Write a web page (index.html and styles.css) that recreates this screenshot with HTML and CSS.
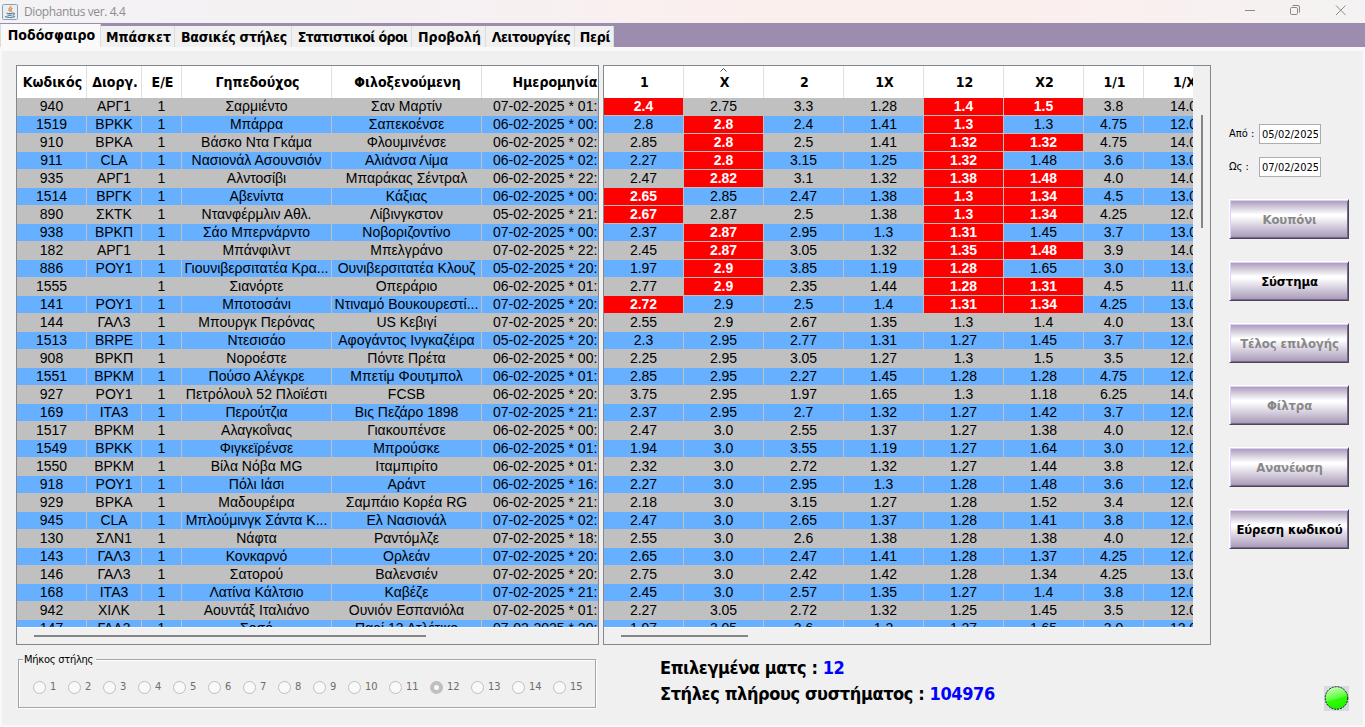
FILE: index.html
```html
<!DOCTYPE html>
<html lang="el">

<head>
	<meta charset="utf-8" />
	<meta name="viewport" content="width=device-width, initial-scale=1.0" />
	<title>Diophantus ver. 4.4</title>
	<link rel="stylesheet" href="styles.css">
	<script src="script.js" defer></script>
</head>

<body>
	<header class="titlebar">
		<svg class="app-icon" width="16" height="16" viewBox="0 0 16 16">
			<rect x="0.5" y="0.5" width="15" height="15" rx="1" fill="#e9eef2" stroke="#8ba0b0" />
			<path d="M8.6 2c1 1.400-2.400 2.300-1.700 3.900.2.600.8 1 .9 1.600M10.400 4.200c-1.400.6-2 1.500-1.300 2.400.4.500.2.900-.2 1.300" fill="none" stroke="#e8803a" stroke-width="1.300" />
			<path d="M4.500 9c1.500.6 4.500.6 6.200 0M5.300 10.900c1.300.5 3.400.5 4.700 0M3 12.600c2.500 1.100 7.500 1.100 10 0M10.800 9.100c2.200-.4 2 1.700-.2 2.100" fill="none" stroke="#5382a1" stroke-width="1.100" />
		</svg>
		<span class="title">Diophantus ver. 4.4</span>
		<svg class="window-buttons" width="106" height="14" viewBox="0 0 106 14" fill="none" stroke="#8c8888">
			<path d="M1 7.500h10" />
			<rect x="46.500" y="4.500" width="7" height="7" rx="1.200" />
			<path d="M48.500 2.500h5.500q1.500 0 1.500 1.500v5.500" />
			<path d="M92 2.500l9.500 9.500M101.500 2.500L92 12" />
		</svg>
	</header>

	<nav class="tabs">
		<span class="tab selected">Ποδόσφαιρο</span>
		<span class="tab tab-basket">Μπάσκετ</span>
		<span class="tab tab-basic">Βασικές στήλες</span>
		<span class="tab tab-stats">Στατιστικοί όροι</span>
		<span class="tab tab-view">Προβολή</span>
		<span class="tab tab-tools">Λειτουργίες</span>
		<span class="tab tab-about">Περί</span>
	</nav>

	<main class="panel">
		<div class="workspace">
			<section class="pane pane-matches">
				<div class="viewport">
					<div class="row head">
						<span>Κωδικός</span><span>Διοργ.</span><span>Ε/Ε</span><span>Γηπεδούχος</span><span>Φιλοξενούμενη</span><span>Ημερομηνία</span>
					</div>
					<div id="matches"></div>
				</div>
				<div class="hscroll"></div>
			</section>

			<section class="pane pane-odds">
				<div class="viewport">
					<div class="row head">
						<span>1</span>
						<span class="sorted"><svg class="sort-mark" width="7" height="4" viewBox="0 0 7 4" fill="none" stroke="#555"><path d="M0.500 3.500l3-3 3 3" /></svg>X</span>
						<span>2</span><span>1X</span><span>12</span><span>X2</span><span>1/1</span><span>1/X</span>
					</div>
					<div id="odds"></div>
				</div>
				<div class="vscroll"></div>
				<div class="hscroll"></div>
			</section>

			<aside class="sidebar">
				<label class="date"><span>Από :</span><input value="05/02/2025"></label>
				<label class="date"><span>Ως :</span><input value="07/02/2025"></label>
				<div class="buttons">
					<button disabled>Κουπόνι</button>
					<button>Σύστημα</button>
					<button disabled>Τέλος επιλογής</button>
					<button disabled>Φίλτρα</button>
					<button disabled>Ανανέωση</button>
					<button>Εύρεση κωδικού</button>
				</div>
			</aside>
		</div>

		<footer class="footer">
			<div class="group">
				<span class="legend">Μήκος στήλης</span>
				<div class="radios" id="lengths"></div>
			</div>
			<div class="status">
				<div>Επιλεγμένα ματς : <b>12</b></div>
				<div>Στήλες πλήρους συστήματος : <b>104976</b></div>
			</div>
			<svg class="led" width="25" height="25" viewBox="0 0 25 25">
				<defs>
					<linearGradient id="shine" x1="0.200" y1="0" x2="0.500" y2="1">
						<stop offset="0" stop-color="#d0ffc4" />
						<stop offset="0.550" stop-color="#5cff3c" />
						<stop offset="0.600" stop-color="#2bff00" />
						<stop offset="1" stop-color="#22f000" />
					</linearGradient>
				</defs>
				<rect width="25" height="25" fill="#d6d9e2" />
				<circle cx="12.500" cy="12" r="11.300" fill="url(#shine)" stroke="#111" stroke-dasharray="2 1" />
			</svg>
		</footer>
	</main>
</body>

</html>
```
FILE: styles.css
```css
* {
	box-sizing: border-box;
}

body {
	margin: 0;
	width: 1365px;
	height: 727px;
	overflow: hidden;
	display: flex;
	flex-direction: column;
	background: #f0f0f0;
	color: #000;
	font-family: "DejaVu Sans Condensed", "DejaVu Sans", sans-serif;
	font-stretch: condensed;
}

.titlebar {
	height: 23px;
	flex: none;
	display: flex;
	align-items: center;
	padding: 0 15px 0 2px;
	background: linear-gradient(90deg, #f3f2f4 0, #f5f1f3 30%, #fbefee 55%, #fbefee 75%, #f4f2f2 100%);
}

.title {
	flex: 1;
	margin-left: 6px;
	color: #8f8c8d;
	font: 12px/22px "Open Sans", sans-serif;
	letter-spacing: -0.4px;
}

.window-buttons {
	margin-bottom: 3px;
}

.tabs {
	height: 24px;
	flex: none;
	display: flex;
	align-items: flex-end;
	background: #9c8cae;
}

.tab {
	height: 21px;
	padding-left: 2px;
	border-right: 1px solid #dcdcdc;
	background: #f0f0f0;
	font-size: 14px;
	font-weight: bold;
	line-height: 22px;
	text-align: center;
	white-space: nowrap;
}

.selected {
	width: 101px;
	height: 23px;
	border-left: 1px solid #dcdcdc;
	background: #f9f9f9;
}

.tab-basket {
	width: 74px;
}

.tab-basic {
	width: 117px;
	letter-spacing: -0.3px;
}

.tab-stats {
	width: 120px;
	letter-spacing: -0.6px;
}

.tab-view {
	width: 74px;
}

.tab-tools {
	width: 89px;
	letter-spacing: -0.5px;
}

.tab-about {
	width: 39px;
	letter-spacing: -0.3px;
}

.panel {
	flex: 1;
	border: solid #f9f9f9;
	border-width: 4px 2px 2px;
	padding: 14px 0 0 14px;
}

.workspace {
	display: flex;
	height: 580px;
}

.pane {
	border: 1px solid #828790;
	display: grid;
	grid-template-rows: 561px 1fr;
}

.pane-matches {
	width: 583px;
}

.pane-odds {
	width: 608px;
	margin-left: 4px;
	grid-template-columns: 589px 1fr;
}

.viewport {
	overflow: hidden;
}

.row {
	display: grid;
	height: 18px;
	border-bottom: 1px solid #c0c0c0;
	font: 14px/17px "Liberation Sans", sans-serif;
	text-align: center;
	white-space: nowrap;
}

.pane-matches .row {
	grid-template-columns: 70px 55px 40px 150px 150px 145px;
}

.pane-odds .row {
	grid-template-columns: repeat(6, 80px) 60px 80px;
}

.row span {
	border-right: 1px solid #c0c0c0;
	background: #c0c0c0;
}

.row:nth-child(even) span {
	background: #66b0ff;
}

.row .date-cell {
	padding-left: 11px;
	text-align: left;
}

.row .picked.picked {
	background: #f00;
	color: #fff;
	font-weight: bold;
}

.row.head {
	height: 32px;
	border-bottom-color: #e6e6e6;
	font: bold 14px/32px "DejaVu Sans Condensed", "DejaVu Sans", sans-serif;
	font-stretch: condensed;
}

.row.head span {
	padding-left: 2px;
	border-right-color: #e0e0e0;
	background: #fff;
}

.sorted {
	position: relative;
}

.sort-mark {
	position: absolute;
	left: 36px;
	top: 2px;
}

.hscroll {
	border-top: 1px solid #fbfbfb;
	padding: 7px 0 0 17px;
}

.hscroll::before,
.vscroll::before {
	content: "";
	display: block;
	background: #868686;
}

.hscroll::before {
	width: 392px;
	height: 2px;
}

.pane-odds .hscroll::before {
	width: 127px;
}

.vscroll {
	padding: 49px 0 0 8px;
}

.vscroll::before {
	width: 2px;
	height: 113px;
}

.sidebar {
	margin: 58px 0 0 18px;
	width: 122px;
}

.date {
	display: flex;
	align-items: center;
	height: 21px;
	margin-bottom: 12px;
	font-size: 11px;
}

.date span {
	width: 30px;
}

.date input {
	width: 62px;
	height: 20px;
	border: 1px solid #abadb3;
	padding: 1px 2px 0;
	background: #fff;
	font: inherit;
}

.buttons {
	display: grid;
	gap: 22px;
	margin-top: 22px;
}

.buttons button {
	width: 120px;
	height: 40px;
	padding: 0 0 0 1px;
	border: 1px solid;
	border-color: #fff #4f4559 #4f4559 #fff;
	box-shadow: inset 1px 1px #e0ccff, inset -1px -1px #76688a;
	background: linear-gradient(#a697b7, #fff 38%, #fff 42%, #a697b7);
	color: #000;
	font: bold 13px "DejaVu Sans Condensed", "DejaVu Sans", sans-serif;
	font-stretch: condensed;
	letter-spacing: -0.1px;
	white-space: nowrap;
}

.buttons button:disabled {
	color: #888;
}

.footer {
	display: flex;
	align-items: flex-start;
}

.group {
	width: 578px;
	height: 49px;
	margin: 14px 0 0 2px;
	border: 1px solid #a5a5a5;
	box-shadow: 1px 1px #fff, inset 1px 1px #fff;
	font-size: 11px;
}

.legend {
	display: block;
	width: 73px;
	margin: -7px 0 0 4px;
	padding-left: 1px;
	background: #f0f0f0;
	line-height: 14px;
	letter-spacing: -0.25px;
	white-space: nowrap;
}

.radios {
	display: flex;
	margin: 13px 0 0 14px;
	color: #6d6d6d;
}

.radios label {
	display: flex;
	align-items: center;
	gap: 4px;
	width: 35px;
	line-height: 14px;
}

.radios .wide {
	width: 41px;
}

.dot {
	width: 13px;
	height: 13px;
	border: 1px solid #bfbfbf;
	border-radius: 50%;
	background: #f9f9f9;
}

.dot.on {
	border: 4px solid #bfbfbf;
}

.status {
	width: 728px;
	padding: 10px 0 0 64px;
	font-size: 18px;
	font-weight: bold;
	line-height: 26px;
	letter-spacing: -0.4px;
	white-space: nowrap;
}

.status b {
	color: #00f;
}

.led {
	margin-top: 41px;
}
```
FILE: script.js
```js
// code, league, min, home, away, kickoff | 1, X, 2, 1X, 12, X2, 1/1, 1/X  (* = picked)
const matches = `
940,ΑΡΓ1,1,Σαρμιέντο,Σαν Μαρτίν,07-02-2025 * 01:|*2.4,2.75,3.3,1.28,*1.4,*1.5,3.8,14.0
1519,ΒΡΚΚ,1,Μπάρρα,Σαπεκοένσε,06-02-2025 * 00:|2.8,*2.8,2.4,1.41,*1.3,1.3,4.75,12.0
910,ΒΡΚΑ,1,Βάσκο Ντα Γκάμα,Φλουμινένσε,06-02-2025 * 02:|2.85,*2.8,2.5,1.41,*1.32,*1.32,4.75,14.0
911,CLA,1,Νασιονάλ Ασουνσιόν,Αλιάνσα Λίμα,06-02-2025 * 02:|2.27,*2.8,3.15,1.25,*1.32,1.48,3.6,13.0
935,ΑΡΓ1,1,Αλντοσίβι,Μπαράκας Σέντραλ,06-02-2025 * 22:|2.47,*2.82,3.1,1.32,*1.38,*1.48,4.0,14.0
1514,ΒΡΓΚ,1,Αβενίντα,Κάξιας,06-02-2025 * 00:|*2.65,2.85,2.47,1.38,*1.3,*1.34,4.5,13.0
890,ΣΚΤΚ,1,Ντανφέρμλιν Αθλ.,Λίβινγκστον,05-02-2025 * 21:|*2.67,2.87,2.5,1.38,*1.3,*1.34,4.25,12.0
938,ΒΡΚΠ,1,Σάο Μπερνάρντο,Νοβοριζοντίνο,07-02-2025 * 00:|2.37,*2.87,2.95,1.3,*1.31,1.45,3.7,13.0
182,ΑΡΓ1,1,Μπάνφιλντ,Μπελγράνο,07-02-2025 * 22:|2.45,*2.87,3.05,1.32,*1.35,*1.48,3.9,14.0
886,ΡΟΥ1,1,Γιουνιβερσιτατέα Κρα...,Ουνιβερσιτατέα Κλουζ,05-02-2025 * 20:|1.97,*2.9,3.85,1.19,*1.28,1.65,3.0,13.0
1555,,1,Σιανόρτε,Οπεράριο,06-02-2025 * 01:|2.77,*2.9,2.35,1.44,*1.28,*1.31,4.5,11.0
141,ΡΟΥ1,1,Μποτοσάνι,Ντιναμό Βουκουρεστί...,07-02-2025 * 20:|*2.72,2.9,2.5,1.4,*1.31,*1.34,4.25,13.0
144,ΓΑΛ3,1,Μπουργκ Περόνας,US Κεβιγί,07-02-2025 * 20:|2.55,2.9,2.67,1.35,1.3,1.4,4.0,13.0
1513,BRPE,1,Ντεσισάο,Αφογάντος Ινγκαζέιρα,05-02-2025 * 20:|2.3,2.95,2.77,1.31,1.27,1.45,3.7,12.0
908,ΒΡΚΠ,1,Νοροέστε,Πόντε Πρέτα,06-02-2025 * 00:|2.25,2.95,3.05,1.27,1.3,1.5,3.5,12.0
1551,ΒΡΚΜ,1,Πούσο Αλέγκρε,Μπετίμ Φουτμπολ,06-02-2025 * 01:|2.85,2.95,2.27,1.45,1.28,1.28,4.75,12.0
927,ΡΟΥ1,1,Πετρόλουλ 52 Πλοϊέστι,FCSB,06-02-2025 * 20:|3.75,2.95,1.97,1.65,1.3,1.18,6.25,14.0
169,ΙΤΑ3,1,Περούτζια,Βις Πεζάρο 1898,07-02-2025 * 21:|2.37,2.95,2.7,1.32,1.27,1.42,3.7,12.0
1517,ΒΡΚΜ,1,Αλαγκοΐνας,Γιακουπένσε,06-02-2025 * 00:|2.47,3.0,2.55,1.37,1.27,1.38,4.0,12.0
1549,ΒΡΚΚ,1,Φιγκεϊρένσε,Μπρούσκε,06-02-2025 * 01:|1.94,3.0,3.55,1.19,1.27,1.64,3.0,12.0
1550,ΒΡΚΜ,1,Βίλα Νόβα MG,Ιταμπιρίτο,06-02-2025 * 01:|2.32,3.0,2.72,1.32,1.27,1.44,3.8,12.0
918,ΡΟΥ1,1,Πόλι Ιάσι,Αράντ,06-02-2025 * 16:|2.27,3.0,2.95,1.3,1.28,1.48,3.6,12.0
929,ΒΡΚΑ,1,Μαδουρέιρα,Σαμπάιο Κορέα RG,06-02-2025 * 21:|2.18,3.0,3.15,1.27,1.28,1.52,3.4,12.0
945,CLA,1,Μπλούμινγκ Σάντα Κ...,Ελ Νασιονάλ,07-02-2025 * 02:|2.47,3.0,2.65,1.37,1.28,1.41,3.8,12.0
130,ΣΛΝ1,1,Νάφτα,Ραντόμλζε,07-02-2025 * 18:|2.55,3.0,2.6,1.38,1.28,1.38,4.0,12.0
143,ΓΑΛ3,1,Κονκαρνό,Ορλεάν,07-02-2025 * 20:|2.65,3.0,2.47,1.41,1.28,1.37,4.25,12.0
146,ΓΑΛ3,1,Σατορού,Βαλενσιέν,07-02-2025 * 20:|2.75,3.0,2.42,1.42,1.28,1.34,4.25,13.0
168,ΙΤΑ3,1,Λατίνα Κάλτσιο,Καβέζε,07-02-2025 * 21:|2.45,3.0,2.57,1.35,1.27,1.4,3.8,12.0
942,ΧΙΛΚ,1,Αουντάξ Ιταλιάνο,Ουνιόν Εσπανιόλα,07-02-2025 * 01:|2.27,3.05,2.72,1.32,1.25,1.45,3.5,12.0
147,ΓΑΛ3,1,Σοσό,Παρί 13 Ατλέτικο,07-02-2025 * 20:|1.97,3.05,3.6,1.2,1.27,1.65,3.0,12.0
`.trim().split("\n").map((line) => line.split("|").map((part) => part.split(",")))

const cell = (text, cls = "") => `<span class="${cls}">${text}</span>`
const row = (cells) => `<div class="row">${cells.join("")}</div>`

document.querySelector("#matches").innerHTML = matches
	.map(([info]) => row(info.map((text, i) => cell(text, i === 5 ? "date-cell" : ""))))
	.join("")

document.querySelector("#odds").innerHTML = matches
	.map(([, odds]) => row(odds.map((odd) => odd[0] === "*" ? cell(odd.slice(1), "picked") : cell(odd))))
	.join("")

let radios = ""
for (let n = 1; n <= 15; n++) {
	radios += `<label class="${n > 9 ? "wide" : ""}"><span class="dot ${n === 12 ? "on" : ""}"></span>${n}</label>`
}
document.querySelector("#lengths").innerHTML = radios
```
